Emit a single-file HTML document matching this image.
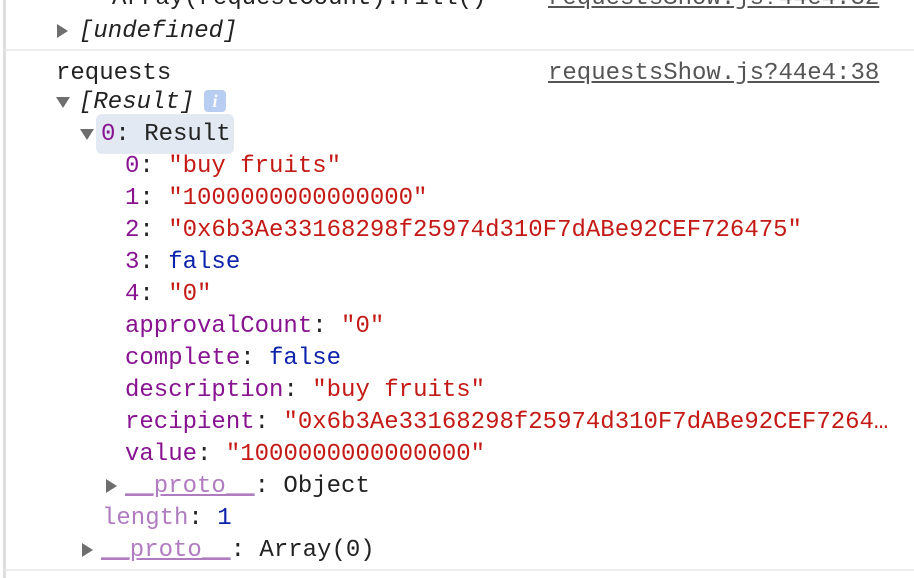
<!DOCTYPE html><html><head><style>
body{margin:0;width:914px;height:578px;overflow:hidden;background:#fff;font-family:"Liberation Mono",monospace;font-size:24px;position:relative}
.l{position:absolute;white-space:pre;line-height:32px;color:#222;margin-top:2px}
.k{color:#881391}.p{color:#b07cc0}.s{color:#c41a16}.n{color:#1a1aa6}.b{color:#0d22aa}
.i{font-style:italic}
.t{position:absolute;width:0;height:0}
.r{border-top:7px solid transparent;border-bottom:7px solid transparent;border-left:11px solid #6e6e6e}
.d{border-left:7px solid transparent;border-right:7px solid transparent;border-top:11px solid #6e6e6e}
a{color:#555;text-decoration:underline}
.sep{position:absolute;left:5px;right:0;height:2px;background:#ececec}
</style></head><body>
<div style="position:absolute;left:3px;top:0;width:3px;height:578px;background:#dedede"></div>
<div class="l" style="left:112px;top:-19px">Array(requestCount).fill()</div>
<div class="l" style="left:548px;top:-19px"><a>requestsShow.js?44e4:32</a></div>
<div class="t r" style="left:57px;top:24px"></div>
<div class="l i" style="left:79px;top:14px">[undefined]</div>
<div class="sep" style="top:49px"></div>
<div class="l" style="left:56px;top:56px">requests</div>
<div class="l" style="left:548px;top:56px"><a>requestsShow.js?44e4:38</a></div>
<div class="t d" style="left:56px;top:97px"></div>
<div class="l i" style="left:79px;top:85px">[Result]</div>
<div style="position:absolute;left:204px;top:90px;width:22px;height:22px;background:#b8cdf2;border-radius:4px;color:#fff;font:italic bold 18px 'Liberation Serif',serif;text-align:center;line-height:22px">i</div>
<div style="position:absolute;left:96px;top:114px;width:138px;height:40px;background:#e3e9f2;border-radius:6px"></div>
<div class="t d" style="left:80px;top:129px"></div>
<div class="l" style="left:101px;top:117px"><span class="k">0</span>: Result</div>
<div class="l" style="left:125px;top:149px"><span class="k">0</span>: <span class="s">"buy fruits"</span></div>
<div class="l" style="left:125px;top:181px"><span class="k">1</span>: <span class="s">"1000000000000000"</span></div>
<div class="l" style="left:125px;top:213px"><span class="k">2</span>: <span class="s">"0x6b3Ae33168298f25974d310F7dABe92CEF726475"</span></div>
<div class="l" style="left:125px;top:245px"><span class="k">3</span>: <span class="b">false</span></div>
<div class="l" style="left:125px;top:277px"><span class="k">4</span>: <span class="s">"0"</span></div>
<div class="l" style="left:125px;top:309px"><span class="k">approvalCount</span>: <span class="s">"0"</span></div>
<div class="l" style="left:125px;top:341px"><span class="k">complete</span>: <span class="b">false</span></div>
<div class="l" style="left:125px;top:373px"><span class="k">description</span>: <span class="s">"buy fruits"</span></div>
<div class="l" style="left:125px;top:405px"><span class="k">recipient</span>: <span class="s">"0x6b3Ae33168298f25974d310F7dABe92CEF7264…</span></div>
<div class="l" style="left:125px;top:437px"><span class="k">value</span>: <span class="s">"1000000000000000"</span></div>
<div class="t r" style="left:106px;top:479px"></div>
<div class="l" style="left:125px;top:469px"><span class="p"><u>__proto__</u></span>: Object</div>
<div class="l" style="left:102px;top:501px"><span class="p">length</span>: <span class="b">1</span></div>
<div class="t r" style="left:82px;top:543px"></div>
<div class="l" style="left:101px;top:533px"><span class="p"><u>__proto__</u></span>: Array(0)</div>
<div class="sep" style="top:569px"></div>
</body></html>
